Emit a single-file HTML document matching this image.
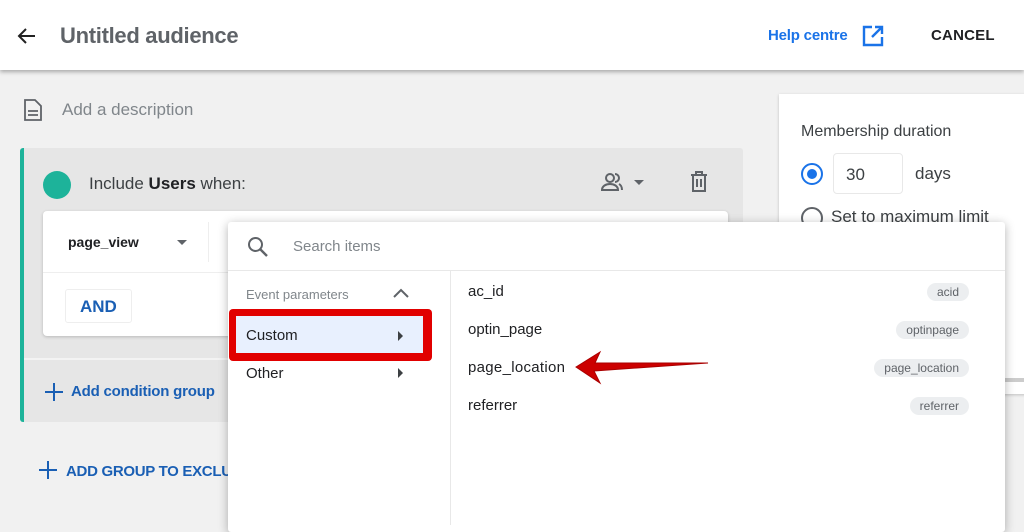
<!DOCTYPE html>
<html><head><style>
*{box-sizing:border-box;margin:0;padding:0}
body{width:1024px;height:525px;overflow:hidden;background:#f1f1f1;font-family:"Liberation Sans",sans-serif;position:relative;color:#3c4043}
.a{position:absolute}
</style></head><body>
<div class="a" style="left:0;top:0;width:1024px;height:70px;background:#fff;box-shadow:0 2px 4px rgba(0,0,0,.3)"></div>
<svg class="a" style="left:15px;top:24px" width="24" height="24" viewBox="0 0 24 24"><path d="M20 12H5M11 5l-7 7 7 7" stroke="#222" stroke-width="2" fill="none"/></svg>
<div class="a" style="left:60px;top:23px;font-size:22px;color:#5f6368;font-weight:bold;letter-spacing:-.3px">Untitled audience</div>
<div class="a" style="left:768px;top:27px;font-size:15px;color:#1a73e8;font-weight:bold;letter-spacing:-.2px">Help centre</div>
<svg class="a" style="left:861px;top:24px" width="24" height="24" viewBox="0 0 24 24"><path d="M11 3H3v18h18v-8M14 3h7v7M21 3l-10 10" stroke="#1a73e8" stroke-width="2.4" fill="none"/></svg>
<div class="a" style="left:931px;top:27px;font-size:15px;color:#202124;font-weight:bold;letter-spacing:.2px">CANCEL</div>
<svg class="a" style="left:23px;top:98px" width="20" height="24" viewBox="0 0 20 24"><path d="M2 2h10l6 6v14H2z M5 13h10M5 17h10" stroke="#5f6368" stroke-width="1.8" fill="none"/></svg>
<div class="a" style="left:62px;top:100px;font-size:17px;color:#80868b">Add a description</div>
<div class="a" style="left:779px;top:94px;width:260px;height:300px;background:#fff;box-shadow:0 1px 3px rgba(0,0,0,.2)"></div>
<div class="a" style="left:801px;top:123px;font-size:16px;color:#3c4043">Membership duration</div>
<div class="a" style="left:801px;top:163px;width:22px;height:22px;border:2px solid #1a73e8;border-radius:50%"></div>
<div class="a" style="left:807px;top:169px;width:10px;height:10px;background:#1a73e8;border-radius:50%"></div>
<div class="a" style="left:833px;top:153px;width:70px;height:41px;border:1px solid #e8e8e8;border-radius:4px;font-size:17px;padding:11px 12px">30</div>
<div class="a" style="left:915px;top:164px;font-size:17px">days</div>
<div class="a" style="left:801px;top:207px;width:22px;height:22px;border:2px solid #5f6368;border-radius:50%"></div>
<div class="a" style="left:831px;top:207px;font-size:17px">Set to maximum limit</div>
<div class="a" style="left:20px;top:148px;width:723px;height:274px;background:#e6e6e6;border-left:4px solid #1db39a;border-radius:3px"></div>
<div class="a" style="left:24px;top:358px;width:719px;height:2px;background:#f3f3f3"></div>
<div class="a" style="left:43px;top:171px;width:28px;height:28px;border-radius:50%;background:#1db39a"></div>
<div class="a" style="left:89px;top:174px;font-size:17px;color:#3c4043">Include <b style="color:#202124">Users</b> when:</div>
<svg class="a" style="left:598px;top:170px" width="50" height="24" viewBox="0 0 50 24"><circle cx="12" cy="8" r="4" stroke="#5f6368" stroke-width="2" fill="none"/><path d="M4 20c0-4 4-6 8-6s8 2 8 6z" stroke="#5f6368" stroke-width="2" fill="none"/><path d="M17 4a4 4 0 0 1 0 8M21 14c2 1 3 3 3 6" stroke="#5f6368" stroke-width="2" fill="none"/><path d="M36 10h10l-5 5z" fill="#5f6368"/></svg>
<svg class="a" style="left:688px;top:170px" width="22" height="24" viewBox="0 0 22 24"><path d="M3 5h16M8 5V2h6v3M5 5v16h12V5M9 9v8M13 9v8" stroke="#5f6368" stroke-width="2" fill="none"/></svg>
<div class="a" style="left:43px;top:211px;width:685px;height:125px;background:#fff;border-radius:4px;box-shadow:0 1px 3px rgba(0,0,0,.2)"></div>
<div class="a" style="left:43px;top:272px;width:685px;height:1px;background:#eee"></div>
<div class="a" style="left:68px;top:234px;font-size:14px;color:#202124;font-weight:bold">page_view</div>
<div class="a" style="left:177px;top:240px;border:5px solid transparent;border-top-color:#5f6368"></div>
<div class="a" style="left:208px;top:222px;width:1px;height:40px;background:#eee"></div>
<div class="a" style="left:65px;top:289px;width:67px;height:34px;border:1px solid #eee;border-radius:3px;font-size:17px;color:#1a5fb4;padding:7px 14px;font-weight:bold">AND</div>
<svg class="a" style="left:43px;top:381px" width="22" height="22" viewBox="0 0 22 22"><path d="M11 2v18M2 11h18" stroke="#1a5fb4" stroke-width="2"/></svg>
<div class="a" style="left:71px;top:383px;font-size:15px;color:#1a5fb4;font-weight:bold;letter-spacing:-.2px">Add condition group</div>
<svg class="a" style="left:38px;top:460px" width="20" height="20" viewBox="0 0 20 20"><path d="M10 1v18M1 10h18" stroke="#1a5fb4" stroke-width="2"/></svg>
<div class="a" style="left:66px;top:463px;font-size:15px;color:#1a5fb4;font-weight:bold;letter-spacing:-.3px">ADD GROUP TO EXCLU</div>
<div class="a" style="left:1005px;top:378px;width:19px;height:4px;background:#ccc"></div>
<div class="a" style="left:228px;top:222px;width:777px;height:310px;background:#fff;box-shadow:0 2px 10px rgba(0,0,0,.3);border-radius:3px"></div>
<svg class="a" style="left:247px;top:236px" width="22" height="22" viewBox="0 0 22 22"><circle cx="8.5" cy="8.5" r="6.5" stroke="#5f6368" stroke-width="2" fill="none"/><path d="M13 13l7 7" stroke="#5f6368" stroke-width="2.4"/></svg>
<div class="a" style="left:293px;top:238px;font-size:15px;color:#80868b">Search items</div>
<div class="a" style="left:228px;top:270px;width:777px;height:1px;background:#e8e8e8"></div>
<div class="a" style="left:450px;top:271px;width:1px;height:254px;background:#e8e8e8"></div>
<div class="a" style="left:246px;top:287px;font-size:13px;color:#80868b">Event parameters</div>
<svg class="a" style="left:392px;top:287px" width="18" height="12" viewBox="0 0 18 12"><path d="M2 10l7-7 7 7" stroke="#5f6368" stroke-width="2" fill="none"/></svg>
<div class="a" style="left:229px;top:309px;width:203px;height:52px;background:#e10000;border-radius:4px"></div>
<div class="a" style="left:236px;top:316px;width:187px;height:37px;background:#e8f0fe"></div>
<div class="a" style="left:246px;top:327px;font-size:15px;color:#202124">Custom</div>
<div class="a" style="left:398px;top:331px;border:5px solid transparent;border-left-color:#3c4043;border-right:0"></div>
<div class="a" style="left:246px;top:365px;font-size:15px;color:#202124">Other</div>
<div class="a" style="left:398px;top:368px;border:5px solid transparent;border-left-color:#3c4043;border-right:0"></div>
<div class="a" style="left:468px;top:283px;font-size:15px;color:#202124">ac_id</div>
<div class="a" style="left:468px;top:321px;font-size:15px;color:#202124">optin_page</div>
<div class="a" style="left:468px;top:359px;font-size:15px;color:#202124;letter-spacing:.3px">page_location</div>
<div class="a" style="left:468px;top:397px;font-size:15px;color:#202124">referrer</div>
<div class="a" style="right:55px;top:283px;font-size:12px;background:#eceef0;border-radius:9px;padding:2px 10px;color:#5f6368">acid</div>
<div class="a" style="right:55px;top:321px;font-size:12px;background:#eceef0;border-radius:9px;padding:2px 10px;color:#5f6368">optinpage</div>
<div class="a" style="right:55px;top:359px;font-size:12px;background:#eceef0;border-radius:9px;padding:2px 10px;color:#5f6368">page_location</div>
<div class="a" style="right:55px;top:397px;font-size:12px;background:#eceef0;border-radius:9px;padding:2px 10px;color:#5f6368">referrer</div>
<svg class="a" style="left:572px;top:348px" width="140" height="40" viewBox="0 0 140 40"><path d="M4 19L28 4l-5 11L136 15l-114 8 6 12z" fill="#cc0000" stroke="#a00" stroke-width="1"/></svg>
</body></html>
